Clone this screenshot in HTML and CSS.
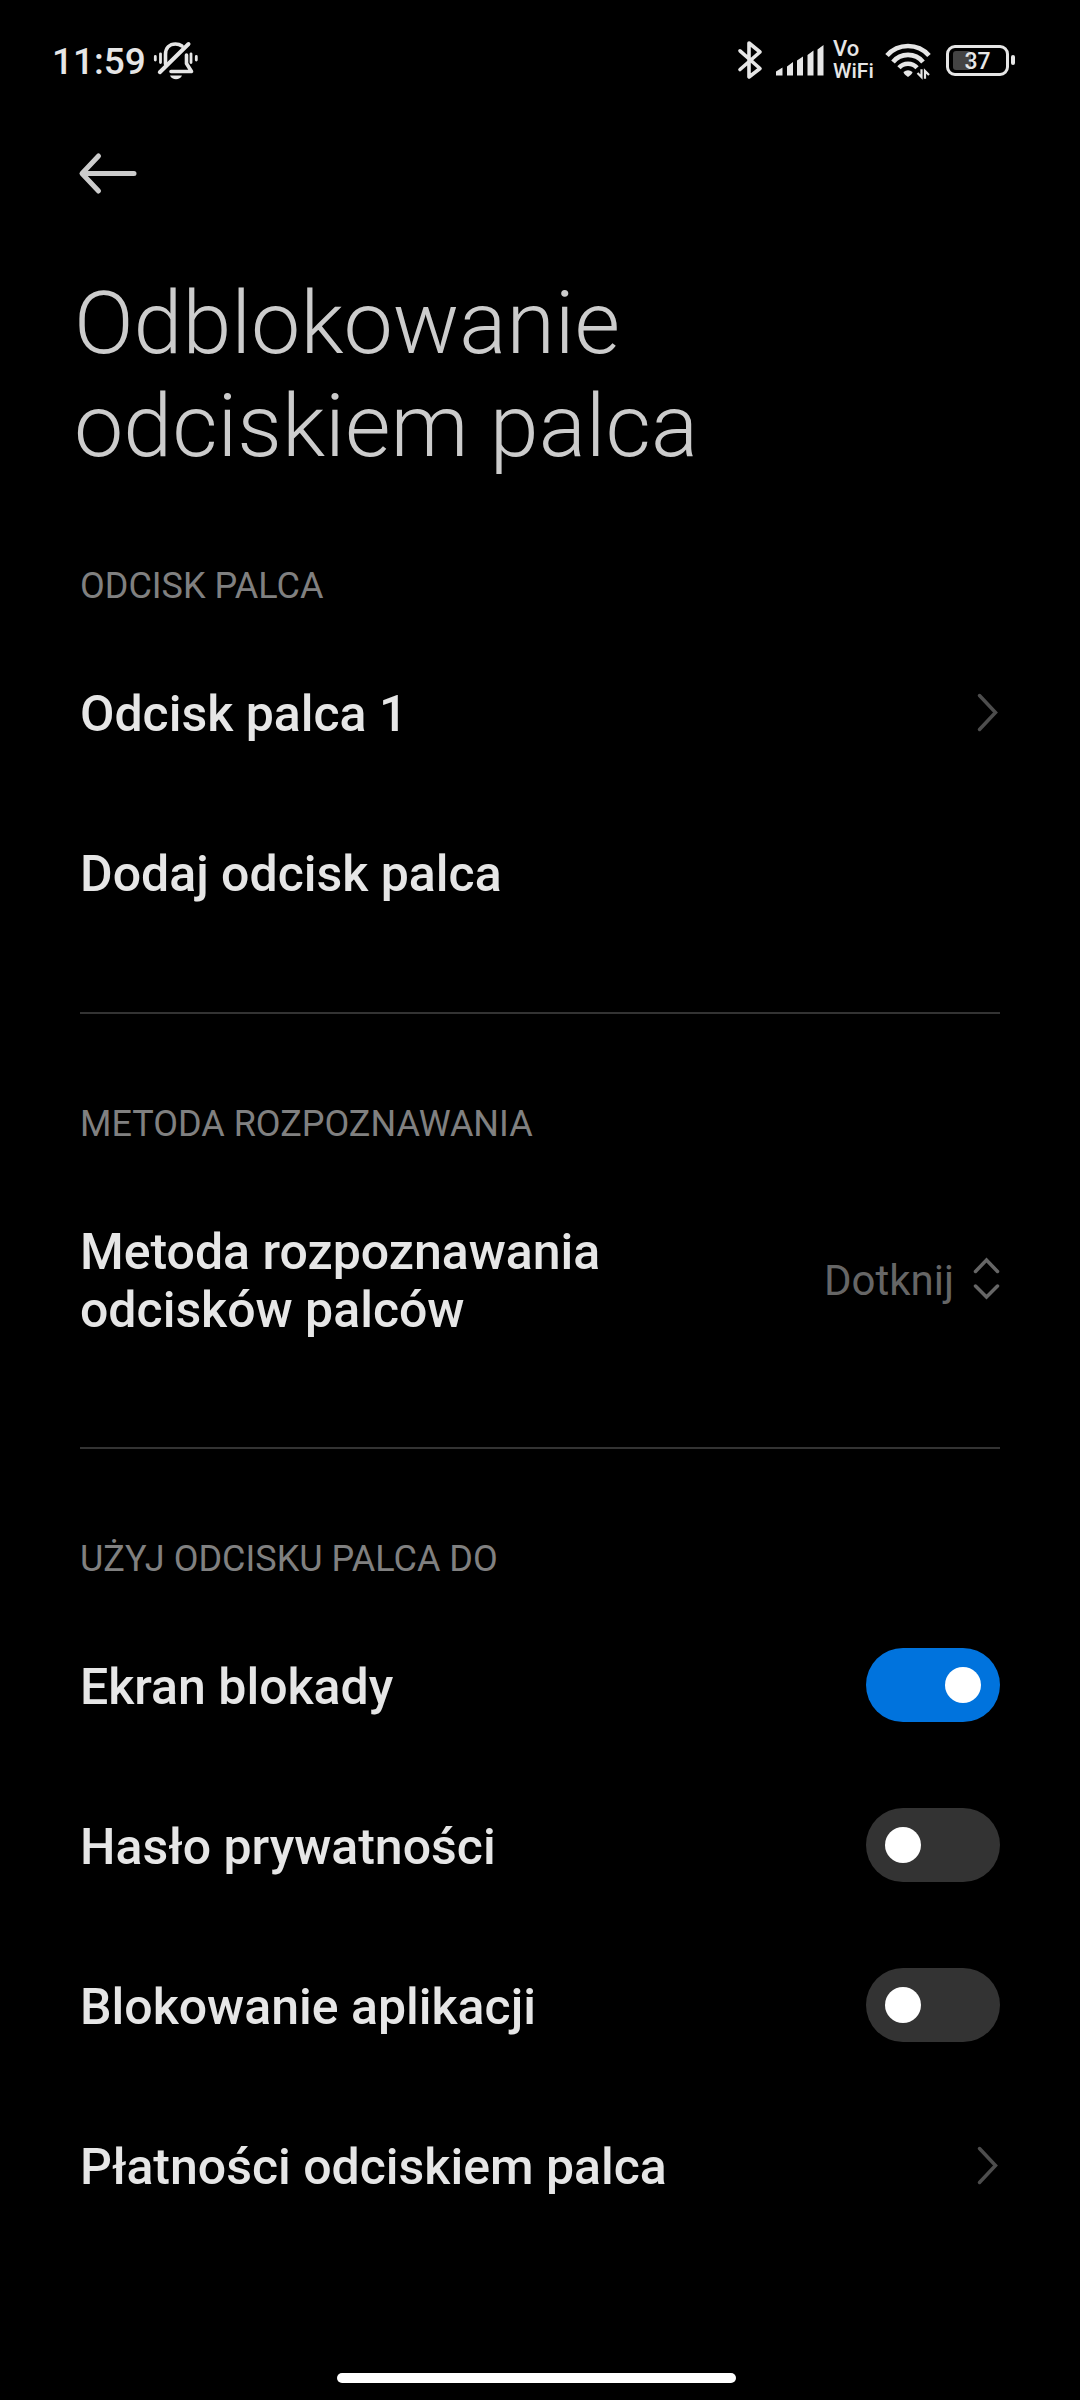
FILE: index.html
```html
<!DOCTYPE html>
<html lang="pl">
	<head>
		<meta charset="utf-8" />
		<meta name="viewport" content="width=device-width" />
		<title>Odblokowanie odciskiem palca</title>
		<link rel="stylesheet" href="styles.css">
	</head>
	<body>
		<div class="status-bar">
			<div class="clock">11:59</div>
			<svg class="icon-muted" width="48" height="40" viewBox="0 0 48 40">
				<g fill="none" stroke="#e6e6e6" stroke-linecap="round" stroke-linejoin="round">
					<path stroke-width="3.6" d="M12.500 24V14.500C12.500 8 16.500 4 22.500 4C25 4 27 4.600 29 6M33.500 15V23.500L38.500 31.500H18" />
					<path stroke-width="4" d="M6.800 32.200L35.500 4" />
					<path stroke-width="2.800" d="M2.300 16.500V20M7.500 13.800V22.500M38 13.800V22.500M43.300 16.500V20" />
				</g>
				<path fill="#e6e6e6" d="M17 35.600H29C27 40.600 19 40.600 17 35.600Z" />
			</svg>
			<div class="status-right">
				<svg class="icon-bt" width="26" height="40" viewBox="0 0 26 40">
					<path fill="none" stroke="#e6e6e6" stroke-width="3.600" stroke-linecap="round" stroke-linejoin="round" d="M3 10.800L23 28.500L12 37V3L23 12L3 29.500" />
				</svg>
				<svg class="icon-signal" width="50" height="40" viewBox="0 0 50 40">
					<path fill="#e6e6e6" d="M1 31.500L7.500 27.500V35.500H1ZM12 26.500L18 22V35.500H12ZM22 20.500L28 16.500V35.500H22ZM32.500 15L38.500 10.500V35.500H32.500ZM42.500 9.500L48.500 5V35.500H42.500Z" />
				</svg>
				<div class="vowifi"><span class="vo">Vo</span><span>WiFi</span></div>
				<svg class="icon-wifi" width="48" height="40" viewBox="0 0 48 40">
					<g fill="none" stroke="#e6e6e6">
						<path stroke-width="4.700" d="M2 15.500A28 28 0 0 1 44 15.500" />
						<path stroke-width="4.700" d="M8 22A19.500 19.500 0 0 1 38 22" />
						<path stroke-width="4.500" d="M14 27.800A12 12 0 0 1 32 27.800" />
						<path stroke-width="2.200" d="M36.500 29.300V37L32.500 33M40 38.700V31L44 35" />
					</g>
					<path fill="#e6e6e6" d="M18.500 32Q23 28.500 27.500 32Q27.500 34 23 37Q18.500 34 18.500 32Z" />
				</svg>
				<div class="battery"><div class="battery-level" style="width: 37%"></div><span class="battery-text">37</span></div>
				<div class="battery-tip"></div>
			</div>
		</div>

		<svg class="back" width="60" height="44" viewBox="0 0 60 44">
			<path fill="none" stroke="#cccccc" stroke-width="5" stroke-linecap="round" stroke-linejoin="round" d="M20.500 5L4 22.500L20.500 40M5 22.500H56" />
		</svg>

		<h1 class="title">Odblokowanie<br>odciskiem palca</h1>

		<div class="section">
			<h2 class="section-title">ODCISK PALCA</h2>
			<div class="row">
				<div class="label">Odcisk palca 1</div>
				<svg class="chevron" width="26" height="44" viewBox="0 0 26 44"><path d="M5.500 5.500L21.500 22.500L5.500 39.500" /></svg>
			</div>
			<div class="row">
				<div class="label">Dodaj odcisk palca</div>
			</div>
		</div>

		<div class="section">
			<h2 class="section-title">METODA ROZPOZNAWANIA</h2>
			<div class="row row-tall">
				<div class="label">Metoda rozpoznawania<br>odcisków palców</div>
				<div class="value">Dotknij</div>
				<svg class="picker" width="28" height="44" viewBox="0 0 28 44"><path d="M3.500 14.500L14.500 3L25.500 14.500M3.500 29L14.500 40L25.500 29" /></svg>
			</div>
		</div>

		<div class="section section-last">
			<h2 class="section-title">UŻYJ ODCISKU PALCA DO</h2>
			<div class="row">
				<div class="label">Ekran blokady</div>
				<div class="toggle toggle-on"></div>
			</div>
			<div class="row">
				<div class="label">Hasło prywatności</div>
				<div class="toggle"></div>
			</div>
			<div class="row">
				<div class="label">Blokowanie aplikacji</div>
				<div class="toggle"></div>
			</div>
			<div class="row">
				<div class="label">Płatności odciskiem palca</div>
				<svg class="chevron" width="26" height="44" viewBox="0 0 26 44"><path d="M5.500 5.500L21.500 22.500L5.500 39.500" /></svg>
			</div>
		</div>

		<div class="home-bar"></div>
	</body>
</html>
```
FILE: styles.css
```css
* {
	box-sizing: border-box;
}

body {
	display: flex;
	flex-direction: column;
	margin: 0px;
	width: 1080px;
	height: 2400px;
	overflow: hidden;
	background-color: #000000;
	color: #e6e6e6;
	font-family: Roboto, sans-serif;
}

svg {
	display: block;
	flex: none;
}

.status-bar {
	display: flex;
	align-items: center;
	height: 120px;
	padding-left: 52px;
	padding-right: 65px;
}

.clock {
	width: 101px;
	font-size: 37px;
	font-weight: 500;
	line-height: 44px;
	padding-top: 4px;
}

.status-right {
	display: flex;
	align-items: center;
	margin-left: auto;
}

.icon-signal {
	margin-left: 12px;
}

.vowifi {
	display: flex;
	flex-direction: column;
	width: 44px;
	margin-left: 8px;
	font-size: 21px;
	font-weight: 500;
	line-height: 23px;
}

.vo {
	font-size: 22px;
	line-height: 22px;
}

.icon-wifi {
	margin-left: 8px;
}

.battery {
	position: relative;
	width: 63px;
	height: 31px;
	margin-left: 13px;
	padding: 3px 4px;
	border: 3px solid #e6e6e6;
	border-radius: 9px;
}

.battery-level {
	height: 19px;
	border-radius: 3px;
	background-color: #444444;
}

.battery-text {
	position: absolute;
	left: 0px;
	top: 1px;
	width: 100%;
	text-align: center;
	font-size: 23px;
	font-weight: 500;
	line-height: 25px;
}

.battery-tip {
	width: 4px;
	height: 10px;
	margin-left: 2px;
	border-radius: 2px;
	background-color: #e6e6e6;
}

.back {
	margin-top: 31px;
	margin-left: 78px;
}

.title {
	margin: 76px 0px 0px 74px;
	font-size: 88px;
	font-weight: 300;
	line-height: 103px;
	color: #cccccc;
}

.section {
	margin: 0px 80px;
	padding-bottom: 60px;
	border-bottom: 2px solid #333333;
}

.section-last {
	border-bottom: none;
}

.section-title {
	margin: 0px;
	padding-top: 88px;
	height: 155px;
	font-size: 36px;
	font-weight: 400;
	line-height: 42px;
	color: #808080;
}

.section + .section .section-title {
	padding-top: 89px;
	height: 156px;
}

.row {
	display: flex;
	align-items: center;
	height: 160px;
}

.row-tall {
	height: 217px;
}

.label {
	margin-right: auto;
	padding-top: 4px;
	font-size: 50px;
	font-weight: 500;
	line-height: 58px;
}

.value {
	padding-top: 3px;
	font-size: 42px;
	color: #666666;
}

.picker {
	margin-left: 18px;
}

.picker path {
	fill: none;
	stroke: #666666;
	stroke-width: 3.5;
	stroke-linecap: round;
}

.chevron path {
	fill: none;
	stroke: #4d4d4d;
	stroke-width: 3.5;
	stroke-linecap: round;
}

.toggle {
	width: 134px;
	height: 74px;
	padding: 19px;
	border-radius: 37px;
	background-color: #333333;
}

.toggle::before {
	content: "";
	display: block;
	width: 36px;
	height: 36px;
	border-radius: 50%;
	background-color: #ffffff;
}

.toggle-on {
	background-color: #0073dd;
}

.toggle-on::before {
	margin-left: 60px;
}

.home-bar {
	width: 399px;
	height: 10px;
	margin: auto 0px 17px 337px;
	border-radius: 5px;
	background-color: #ffffff;
}
```
